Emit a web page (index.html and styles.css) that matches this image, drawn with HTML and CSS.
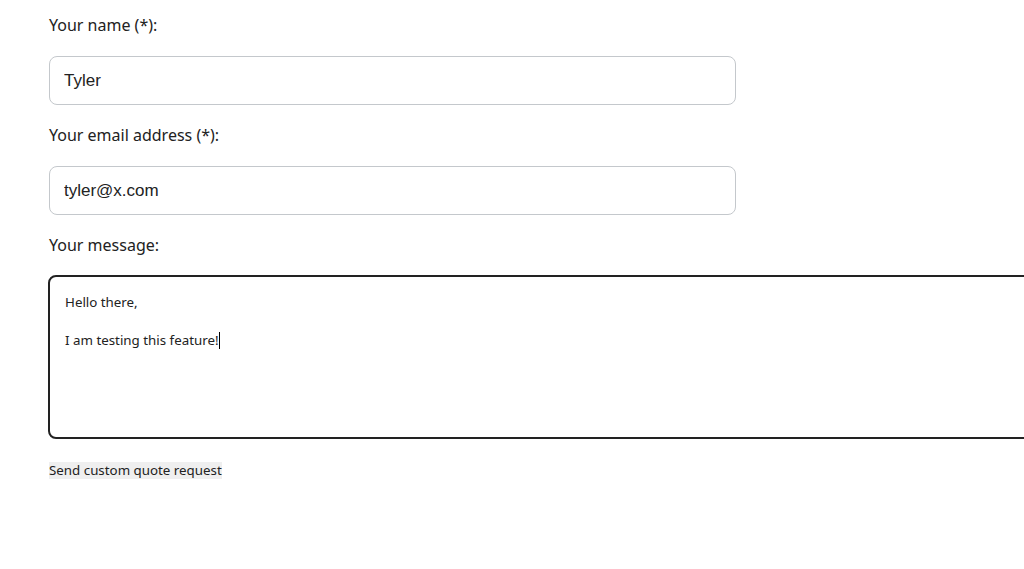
FILE: index.html
```html
<!DOCTYPE html>
<html>
<head>
<meta charset="utf-8">
<link rel="stylesheet" href="styles.css">
</head>
<body>
<form class="quote-form">
  <label class="field-label" for="name">Your name (*):</label>
  <input class="text-input" id="name" type="text" value="Tyler">
  <label class="field-label" for="email">Your email address (*):</label>
  <input class="text-input" id="email" type="text" value="tyler@x.com">
  <label class="field-label" for="msg">Your message:</label>
  <div class="message-box" id="msg">
    <p class="msg-line">Hello there,</p>
    <p class="msg-line msg-blank">&nbsp;</p>
    <p class="msg-line">I am testing this feature!<span class="caret"></span></p>
  </div>
  <div class="actions">
    <button class="send-btn" type="button">Send custom quote request</button>
  </div>
</form>
</body>
</html>
```
FILE: styles.css
```css
html, body {
  margin: 0;
  padding: 0;
  background: #ffffff;
  overflow: hidden;
}
body {
  font-family: "Noto Sans", "Open Sans", sans-serif;
  color: #222222;
}
.quote-form {
  display: flex;
  flex-direction: column;
  align-items: flex-start;
  padding: 13px 0 0 49px;
}
.field-label {
  display: block;
  font-size: 16px;
  line-height: 24px;
  height: 24px;
  margin-bottom: 19px;
  color: #222222;
}
.text-input {
  box-sizing: border-box;
  width: 687px;
  height: 49px;
  margin: 0 0 18px 0;
  padding: 0 14px;
  border: 1px solid #c4c8cc;
  border-radius: 8px;
  font-family: "Liberation Sans", Arial, sans-serif;
  font-size: 17px;
  color: #222222;
  background: #ffffff;
  outline: none;
}
.message-box {
  box-sizing: border-box;
  width: 1000px;
  height: 164px;
  margin: -1px 0 0 -1px;
  border: 2px solid #222222;
  border-radius: 8px;
  padding: 16px 15px 15px;
  font-size: 13.333px;
  line-height: 19px;
  color: #222222;
}
.msg-line {
  margin: 0;
  white-space: pre;
}
.caret {
  display: inline-block;
  width: 1px;
  height: 17px;
  background: #000000;
  vertical-align: -4px;
}
.actions {
  margin-top: 19px;
}
.send-btn {
  font-family: "Noto Sans", "Open Sans", sans-serif;
  font-size: 13.333px;
  line-height: 17px;
  padding: 0;
  border: none;
  background: #efefef;
  color: #222222;
}
```
